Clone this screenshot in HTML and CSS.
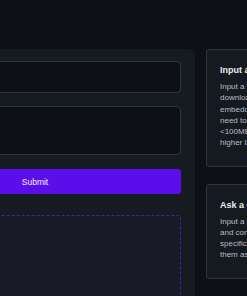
FILE: index.html
```html
<!DOCTYPE html>
<html>

<head>
    <meta charset="utf-8">
    <title>Video Q&amp;A</title>
    <link rel="stylesheet" href="styles.css">
</head>

<body>
    <div id="app">
        <main class="panel">
            <input type="text" class="field" id="url">
            <textarea class="field area" id="question"></textarea>
            <button class="submit" id="submitbtn">Submit</button>
            <div class="dropzone"></div>
        </main>
        <aside class="side">
            <div class="card">
                <h3>Input a YouTube URL</h3>
                <p>Input a YouTube video URL to<br>download the transcript and create<br>embeddings for it. You may<br>need to wait a while for long videos<br>&lt;100MB are recommended for<br>higher latency on the first run</p>
            </div>
            <div class="card">
                <h3>Ask a question</h3>
                <p>Input a question about the video<br>and context will be retrieved for<br>specific parts of the transcript and<br>them as sources for the answer</p>
            </div>
            <div class="card">
                <h3>Get an answer</h3>
            </div>
        </aside>
    </div>
</body>

</html>
```

FILE: styles.css
```css
* {
    box-sizing: border-box;
    margin: 0px;
    padding: 0px;
    font-family: "Liberation Sans", Arial, sans-serif;
}

body {
    background-color: #0d1117;
    overflow: hidden;
}

#app {
    display: flex;
    gap: 11px;
    padding-top: 49px;
    margin-left: -125px;
}

.panel {
    width: 320px;
    flex-shrink: 0;
    min-height: 300px;
    padding: 12px 14px;
    border-radius: 6px;
    background-color: #161a21;
    display: flex;
    flex-direction: column;
}

.field {
    width: 100%;
    height: 32px;
    border: 1px solid #30353d;
    border-radius: 4px;
    background-color: #0d1016;
    resize: none;
}

.area {
    height: 49px;
    margin-top: 13px;
}

.submit {
    height: 25px;
    margin-top: 14px;
    border: none;
    border-radius: 3px;
    background-color: #5c0eea;
    color: #f2eefe;
    font-size: 8.5px;
}

.dropzone {
    height: 120px;
    margin-top: 21px;
    border: 1px dashed #4b1ca0;
    border-radius: 3px;
    background-color: #191a27;
}

.side {
    width: 220px;
    flex-shrink: 0;
    display: flex;
    flex-direction: column;
    gap: 17px;
}

.card {
    padding: 14px 13px 17px;
    border: 1px solid #30353d;
    border-radius: 3px;
    background-color: #151920;
    white-space: nowrap;
}

.card h3 {
    font-size: 9px;
    line-height: 12px;
    font-weight: 700;
    color: #e8ebef;
    margin-bottom: 5px;
}

.card p {
    font-size: 8px;
    line-height: 11.25px;
    color: #b8bdc4;
}
```
